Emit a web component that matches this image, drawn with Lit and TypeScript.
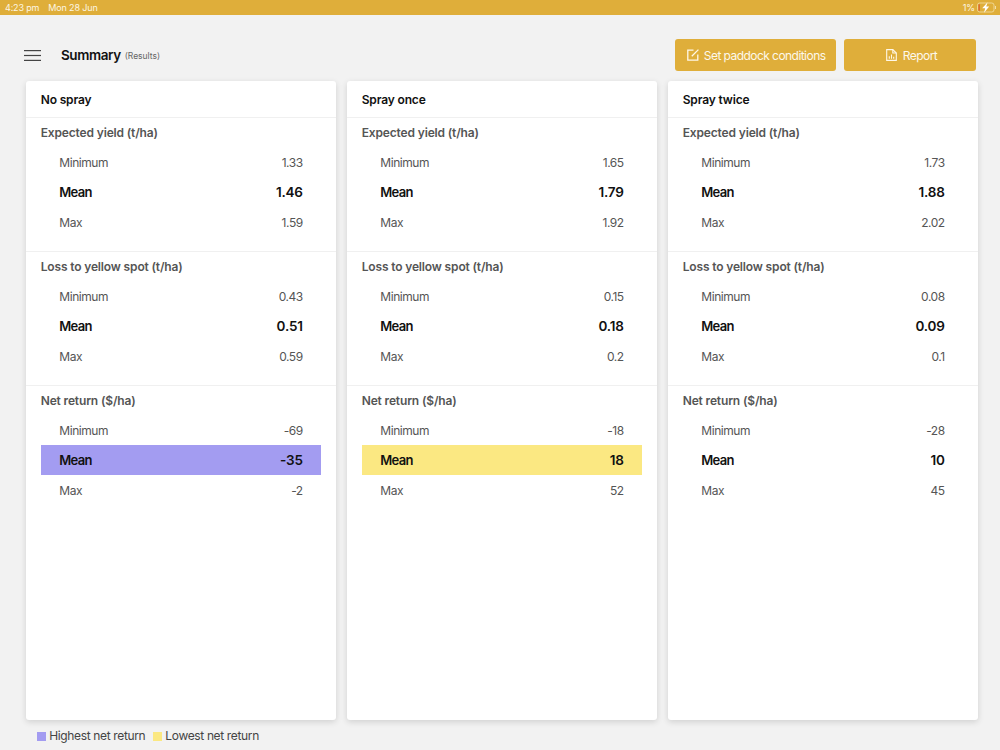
import { LitElement, html, css } from "lit";
import { customElement } from "lit/decorators.js";

interface Card { name: string; sections: { title: string; rows: string[]; hl?: string }[] }

const titles = ["Expected yield (t/ha)", "Loss to yellow spot (t/ha)", "Net return ($/ha)"];
const mk = (name: string, a: string[], b: string[], c: string[], hl?: string): Card => ({
  name,
  sections: [
    { title: titles[0], rows: a },
    { title: titles[1], rows: b },
    { title: titles[2], rows: c, hl },
  ],
});
const cards: Card[] = [
  mk("No spray", ["1.33", "1.46", "1.59"], ["0.43", "0.51", "0.59"], ["-69", "-35", "-2"], "high"),
  mk("Spray once", ["1.65", "1.79", "1.92"], ["0.15", "0.18", "0.2"], ["-18", "18", "52"], "low"),
  mk("Spray twice", ["1.73", "1.88", "2.02"], ["0.08", "0.09", "0.1"], ["-28", "10", "45"]),
];
const labels = ["Minimum", "Mean", "Max"];

@customElement("app-root")
export class AppRoot extends LitElement {
  static styles = css`
    :host {
      display: block;
      width: 1000px;
      height: 750px;
      overflow: hidden;
      background: #f2f2f2;
      font-family: Inter, "Liberation Sans", sans-serif;
      color: #000;
    }
    .status {
      height: 15px;
      background: #dfae3a;
      color: #fdf6e3;
      font-size: 9px;
      letter-spacing: -0.15px;
      line-height: 14px;
      display: flex;
      align-items: center;
      justify-content: space-between;
      padding: 0 3px 0 5px;
    }
    .status .left { display: flex; gap: 9px; }
    .status .right { display: flex; align-items: center; gap: 2px; }
    .status svg { display: block; }
    .header {
      height: 66px;
      box-sizing: border-box;
      padding: 14px 23.7px 0 24px;
      display: flex;
      align-items: center;
    }
    .menu { display: block; margin-right: 20px; }
    .title { font-size: 13.5px; font-weight: 600; color: #111; letter-spacing: -0.42px; }
    .sub { font-size: 8.5px; color: #666; margin-left: 4px; position: relative; top: 1px; }
    .spacer { flex: 1; }
    .btn {
      height: 32px;
      box-sizing: border-box;
      background: #dfae3a;
      border-radius: 3px;
      color: #fdf8ea;
      font-size: 12px;
      letter-spacing: -0.55px;
      display: flex;
      align-items: center;
      justify-content: center;
      gap: 5px;
    }
    .btn svg { display: block; }
    .b1 { width: 160.7px; margin-right: 8.6px; padding-left: 1.5px; }
    .b2 { width: 132px; gap: 6px; padding-left: 2.4px; }
    .cards {
      display: flex;
      gap: 11px;
      padding: 0 22px 0 26px;
    }
    .card {
      width: 310px;
      height: 639px;
      background: #fff;
      border-radius: 3px;
      box-shadow: 0 2px 6px rgba(0, 0, 0, 0.14);
    }
    .card-head {
      height: 37px;
      box-sizing: border-box;
      border-bottom: 1px solid #f0f0f0;
      padding: 1px 14.7px 0;
      display: flex;
      align-items: center;
      font-size: 12px;
      line-height: 14px;
      letter-spacing: -0.15px;
      font-weight: 600;
      color: #111;
    }
    .section {
      height: 134px;
      box-sizing: border-box;
      padding: 0 14.7px;
      border-bottom: 1px solid #f0f0f0;
    }
    .section:last-child { border-bottom: none; }
    .sec-title {
      height: 29px;
      box-sizing: border-box;
      padding-top: 1px;
      display: flex;
      align-items: center;
      font-size: 12px;
      line-height: 14px;
      letter-spacing: -0.15px;
      font-weight: 600;
      color: #555;
    }
    .row {
      height: 30px;
      display: flex;
      align-items: center;
      justify-content: space-between;
      padding: 0 18.6px;
      font-size: 12px;
      letter-spacing: -0.45px;
      color: #555;
    }
    .row.mean { font-size: 13px; letter-spacing: -0.65px; font-weight: 600; color: #111; }
    .row.mean .val { font-size: 13.5px; letter-spacing: -0.2px; }
    .row.high { background: #a39cf1; }
    .row.low { background: #fbe882; }
    .legend {
      display: flex;
      align-items: center;
      padding: 9px 0 0 36.7px;
      font-size: 12px;
      letter-spacing: -0.35px;
      color: #444;
      line-height: 14px;
    }
    .sw { width: 9px; height: 9px; margin-right: 3.5px; }
    .sw.high { background: #a39cf1; }
    .sw.low { background: #fbe882; margin-left: 7.5px; }
  `;

  render() {
    return html`
      <div class="status">
        <div class="left"><span>4:23 pm</span><span>Mon 28 Jun</span></div>
        <div class="right">
          <span>1%</span>
          <svg width="20" height="11" viewBox="0 0 20 11">
            <rect x="0.5" y="1" width="16.5" height="9" rx="2.2" fill="none" stroke="#f3dfa8" stroke-width="0.8"></rect>
            <rect x="1.6" y="2.2" width="1" height="6.6" fill="#d9472b"></rect>
            <path d="M10.6 0.2 L5.2 6.2 H8.2 L7 10.8 L12.2 4.6 H9.2 Z" fill="#fff"></path>
            <rect x="18" y="4" width="1" height="3" fill="#f3dfa8"></rect>
          </svg>
        </div>
      </div>
      <div class="header">
        <svg class="menu" width="17" height="11" viewBox="0 0 17 11">
          <g stroke="#444" stroke-width="1.2">
            <line x1="0" x2="17" y1="0.6" y2="0.6"></line>
            <line x1="0" x2="17" y1="5.5" y2="5.5"></line>
            <line x1="0" x2="17" y1="10.4" y2="10.4"></line>
          </g>
        </svg>
        <span class="title">Summary</span><span class="sub">(Results)</span>
        <div class="spacer"></div>
        <div class="btn b1">
          <svg width="12" height="12" viewBox="0 0 12 12" fill="none" stroke="#fff8e8" stroke-width="1.3">
            <path d="M6.5 1.2 H0.8 V11.2 H10.8 V5.5"></path>
            <path d="M4.8 7.2 L11.4 0.6"></path>
          </svg>
          <span>Set paddock conditions</span>
        </div>
        <div class="btn b2">
          <svg width="11" height="12" viewBox="0 0 11 12" fill="none" stroke="#fff8e8" stroke-width="1.1">
            <path d="M0.7 0.6 H6.8 L10.3 4 V11.4 H0.7 Z"></path>
            <path d="M6.8 0.6 V4 H10.3"></path>
            <path d="M3.3 9.8 V7.2 M5.5 9.8 V5.4 M7.7 9.8 V7.8"></path>
          </svg>
          <span>Report</span>
        </div>
      </div>
      <div class="cards">
        ${cards.map(
          (c) => html`
            <div class="card">
              <div class="card-head">${c.name}</div>
              ${c.sections.map(
                (s) => html`
                  <div class="section">
                    <div class="sec-title">${s.title}</div>
                    ${s.rows.map(
                      (v, i) => html`
                        <div class="row ${i === 1 ? "mean" : ""} ${i === 1 && s.hl ? s.hl : ""}">
                          <span>${labels[i]}</span><span class="val">${v}</span>
                        </div>
                      `
                    )}
                  </div>
                `
              )}
            </div>
          `
        )}
      </div>
      <div class="legend">
        <div class="sw high"></div><span>Highest net return</span>
        <div class="sw low"></div><span>Lowest net return</span>
      </div>
    `;
  }
}
